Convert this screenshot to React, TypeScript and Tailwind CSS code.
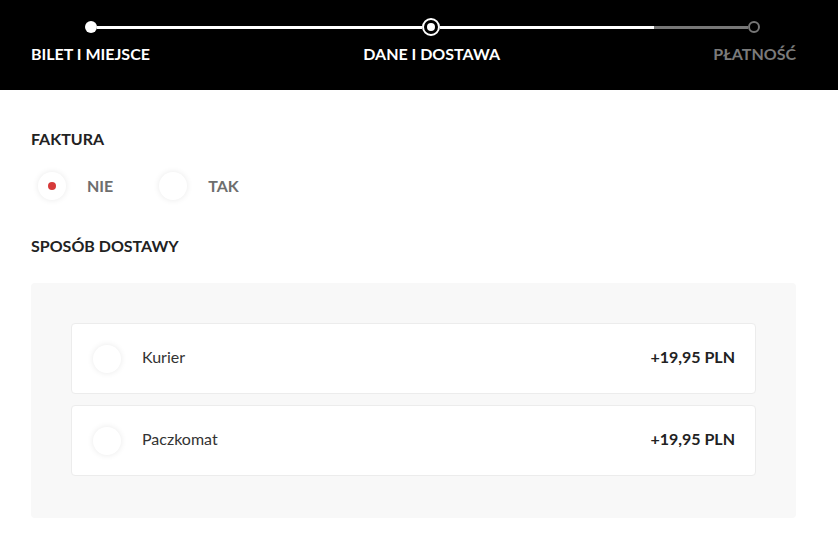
import { useState } from "react";

const steps = ["BILET I MIEJSCE", "DANE I DOSTAWA", "PŁATNOŚĆ"];

const deliveries = [
  { id: "kurier", name: "Kurier", price: "+19,95 PLN" },
  { id: "paczkomat", name: "Paczkomat", price: "+19,95 PLN" },
];

function Radio({ checked }: { checked: boolean }) {
  return (
    <span className="flex h-7 w-7 shrink-0 items-center justify-center rounded-full bg-white shadow-[0_0_6px_rgba(0,0,0,0.09)]">
      {checked && <span className="h-2 w-2 rounded-full bg-[#d63a3a]" />}
    </span>
  );
}

export default function App() {
  const [invoice, setInvoice] = useState("nie");
  const [delivery, setDelivery] = useState("");

  return (
    <div className="min-h-screen bg-white font-['Lato','Noto_Sans',sans-serif]">
      {/* stepper */}
      <div className="h-[90px] bg-black pl-[31px] pr-[42px] pt-[18px]">
        <div className="flex items-center pl-[54px]">
          <span className="h-3 w-3 rounded-full bg-white" />
          <span className="h-[3px] w-[325px] bg-white" />
          <span className="flex h-[18px] w-[18px] items-center justify-center rounded-full border-2 border-white">
            <span className="h-2 w-2 rounded-full bg-white" />
          </span>
          <span className="h-[3px] w-[214px] bg-white" />
          <span className="h-[3px] w-[94px] bg-[#777]" />
          <span className="h-3 w-3 rounded-full border-2 border-[#777]" />
        </div>
        <div className="mt-[8px] flex justify-between text-[16px] font-bold leading-5">
          {steps.map((s, i) => (
            <span key={s} className={i === 2 ? "text-[#7a7a7a]" : "text-white"}>
              {s}
            </span>
          ))}
        </div>
      </div>

      <div className="pl-[31px] pr-[42px] pt-[39px]">
        <h2 className="text-[16px] font-bold leading-5 text-[#222]">FAKTURA</h2>
        <div className="mt-[23px] flex items-center pl-[7px]">
          {[
            { id: "nie", label: "NIE" },
            { id: "tak", label: "TAK" },
          ].map((o) => (
            <button
              key={o.id}
              onClick={() => setInvoice(o.id)}
              className="mr-[46px] flex items-center gap-[21px] text-[16px] font-bold text-[#6e6e6e]"
            >
              <Radio checked={invoice === o.id} />
              {o.label}
            </button>
          ))}
        </div>

        <h2 className="mt-[36px] text-[16px] font-bold leading-5 text-[#222]">SPOSÓB DOSTAWY</h2>

        <div className="mt-[27px] flex flex-col gap-[11px] rounded-[4px] bg-[#f8f8f8] px-[40px] pb-[42px] pt-[40px]">
          {deliveries.map((d) => (
            <button
              key={d.id}
              onClick={() => setDelivery(d.id)}
              className="flex h-[71px] items-center rounded-[4px] border border-[#ececec] bg-white pl-[21px] pr-[20px] text-left"
            >
              <Radio checked={delivery === d.id} />
              <span className="-mt-[3px] ml-[21px] flex-1 text-[16px] text-[#333]">{d.name}</span>
              <span className="-mt-[3px] text-[16px] font-bold text-[#222]">{d.price}</span>
            </button>
          ))}
        </div>
      </div>
    </div>
  );
}
